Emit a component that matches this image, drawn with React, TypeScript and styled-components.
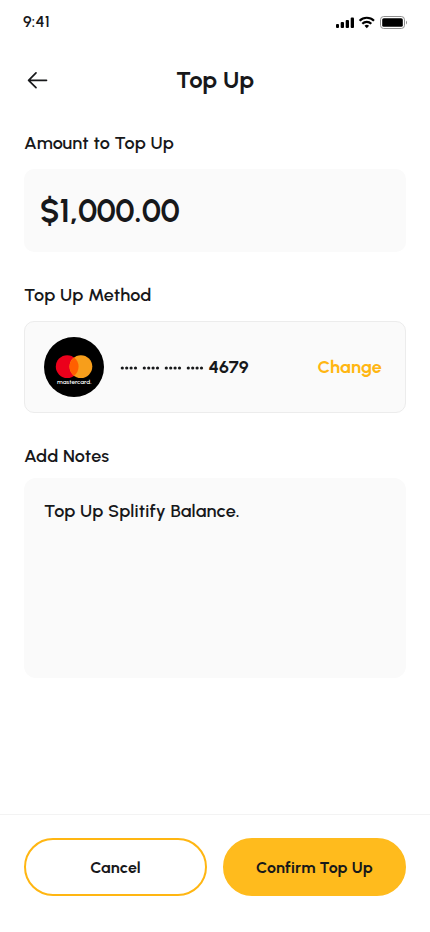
import React from "react";
import styled, { createGlobalStyle } from "styled-components";

const GlobalStyle = createGlobalStyle`
  *, *::before, *::after { box-sizing: border-box; }
  body { margin: 0; background: #fff; }
  button { font: inherit; color: inherit; cursor: pointer; }
`;

const Screen = styled.main`
  width: 430px;
  height: 932px;
  display: flex;
  flex-direction: column;
  background: #fff;
  color: #17181a;
  font-family: Urbanist, Lato, sans-serif;
  overflow: hidden;
`;

const StatusBar = styled.div`
  height: 44px;
  flex: none;
  display: flex;
  align-items: center;
  justify-content: space-between;
  padding: 0 23px;
`;

const Text = styled.span<{ $size: number; $weight?: number; $spacing?: number }>`
  font-size: ${(p) => p.$size}px;
  line-height: 1.2;
  font-weight: ${(p) => p.$weight ?? 600};
  letter-spacing: ${(p) => p.$spacing ?? 0}px;
  white-space: nowrap;
`;

const StatusIcons = styled.svg`
  display: block;
  width: 72px;
  height: 14px;
`;

const Header = styled.header`
  height: 72px;
  flex: none;
  display: grid;
  grid-template-columns: 28px 1fr 28px;
  align-items: center;
  padding: 0 24px;
`;

const BackButton = styled.button`
  display: flex;
  padding: 0;
  border: 0;
  background: none;
`;

const Title = styled.h1`
  margin: 0;
  padding-bottom: 2px;
  text-align: center;
  font-size: 24px;
  line-height: 29px;
  font-weight: 700;
`;

const Content = styled.div`
  flex: 1;
  display: flex;
  flex-direction: column;
  padding: 16px 24px 0;
`;

const Label = styled.h2<{ $gap: number }>`
  margin: 0 0 ${(p) => p.$gap}px;
  font-size: 18px;
  line-height: 22px;
  font-weight: 600;
  letter-spacing: 0.18px;
`;

const AmountBox = styled.div`
  height: 83px;
  margin-bottom: 32px;
  padding: 2px 16px 0;
  display: flex;
  align-items: center;
  border-radius: 10px;
  background: #fafafa;
`;

const MethodCard = styled.div`
  height: 92px;
  margin-bottom: 32px;
  padding: 0 23px 0 19px;
  display: flex;
  align-items: center;
  border: 1px solid #ececec;
  border-radius: 10px;
  background: #fafafa;
`;

const CardNumber = styled.div`
  flex: 1;
  margin-left: 16px;
  padding-top: 2px;
  display: flex;
  align-items: center;
  gap: 4px;
`;

const ChangeButton = styled.button`
  padding: 2px 0 0;
  border: 0;
  background: none;
  color: #ffb612;
`;

const Notes = styled.div`
  height: 200px;
  padding: 23px 20px;
  border-radius: 12px;
  background: #fafafa;
`;

const Footer = styled.footer`
  height: 118px;
  flex: none;
  display: grid;
  grid-template-columns: 1fr 1fr;
  gap: 16px;
  align-items: start;
  padding: 23px 24px 0;
  border-top: 1px solid #f3f3f3;
`;

const PillButton = styled.button<{ $filled?: boolean }>`
  height: 58px;
  display: flex;
  align-items: center;
  justify-content: center;
  padding: 2px 0 0;
  border: 2px solid ${(p) => (p.$filled ? "#ffbb1d" : "#ffb612")};
  border-radius: 29px;
  background: ${(p) => (p.$filled ? "#ffbb1d" : "#fff")};
`;

const dotStarts = [0, 22, 44, 66];
const dotOffsets = [2.3, 6.7, 11.1, 15.5];

const MaskedDigits = () => (
  <svg width="84.500" height="6" viewBox="0 0 84.5 6" aria-label="masked digits">
    {dotStarts.map((start) =>
      dotOffsets.map((offset) => (
        <circle key={start + offset} cx={start + offset} cy="3" r="1.6" fill="#17181a" />
      )),
    )}
  </svg>
);

const MastercardLogo = () => (
  <svg width="60" height="60" viewBox="0 0 60 60" aria-label="Mastercard">
    <circle cx="30" cy="30" r="30" fill="#000" />
    <circle cx="23.200" cy="29.6" r="11.4" fill="#eb001b" />
    <circle cx="36.9" cy="29.6" r="11.4" fill="#f79e1b" />
    <path d="M30.05 20.5a11.4 11.4 0 0 1 0 18.200a11.4 11.4 0 0 1 0-18.200Z" fill="#ff5f00" />
    <text
      x="13"
      y="46.6"
      fill="#fff"
      fontFamily="Urbanist, Lato, sans-serif"
      fontSize="6.5"
      fontWeight="600"
      textLength="34.5"
      lengthAdjust="spacingAndGlyphs"
    >
      mastercard.
    </text>
  </svg>
);

export default function App() {
  return (
    <>
      <GlobalStyle />
      <Screen>
        <StatusBar>
          <Text $size={16} $spacing={0.2}>9:41</Text>
          <StatusIcons viewBox="0 0 72 14">
            <rect x="1" y="9" width="3" height="4" rx="1" />
            <rect x="5.7" y="7" width="3.3" height="6" rx="1" />
            <rect x="10.7" y="5" width="3.3" height="8" rx="1" />
            <rect x="15.7" y="2.5" width="3.3" height="10.5" rx="1" />
            <g fill="none" stroke="#000" strokeWidth="2.2">
              <path d="M24.6 5.7a10.3 10.3 0 0 1 14.4 0" />
              <path d="M27.3 8.8a6.4 6.4 0 0 1 9 0" />
            </g>
            <path d="M31.8 13.2l2.3-2.4a3.4 3.4 0 0 0-4.6 0Z" />
            <rect x="45.5" y="1.5" width="24" height="12" rx="3.2" fill="none" stroke="#8f8f8f" />
            <rect x="47.2" y="3.2" width="20.6" height="8.6" rx="1.6" />
            <path d="M71 5.7v3.7c.7-.3 1-.9 1-1.8s-.3-1.6-1-1.9Z" fill="#8f8f8f" />
          </StatusIcons>
        </StatusBar>
        <Header>
          <BackButton aria-label="Back">
            <svg width="28" height="28" viewBox="0 0 28 28" fill="none" stroke="#17181a" strokeWidth="1.7" strokeLinecap="round" strokeLinejoin="round">
              <path d="M22.5 14.3H4.6M12 6.9L4.600 14.3L12 21.7" />
            </svg>
          </BackButton>
          <Title>Top Up</Title>
        </Header>
        <Content>
          <Label $gap={15}>Amount to Top Up</Label>
          <AmountBox>
            <Text $size={32} $weight={700}>$1,000.00</Text>
          </AmountBox>
          <Label $gap={15}>Top Up Method</Label>
          <MethodCard>
            <MastercardLogo />
            <CardNumber>
              <MaskedDigits />
              <Text $size={18} $weight={700}>4679</Text>
            </CardNumber>
            <ChangeButton>
              <Text $size={18} $weight={700} $spacing={0.1}>Change</Text>
            </ChangeButton>
          </MethodCard>
          <Label $gap={11}>Add Notes</Label>
          <Notes>
            <Text $size={18} $spacing={0.2}>Top Up Splitify Balance.</Text>
          </Notes>
        </Content>
        <Footer>
          <PillButton>
            <Text $size={16} $weight={700} $spacing={0.2}>Cancel</Text>
          </PillButton>
          <PillButton $filled>
            <Text $size={16} $weight={700} $spacing={0.2}>Confirm Top Up</Text>
          </PillButton>
        </Footer>
      </Screen>
    </>
  );
}
